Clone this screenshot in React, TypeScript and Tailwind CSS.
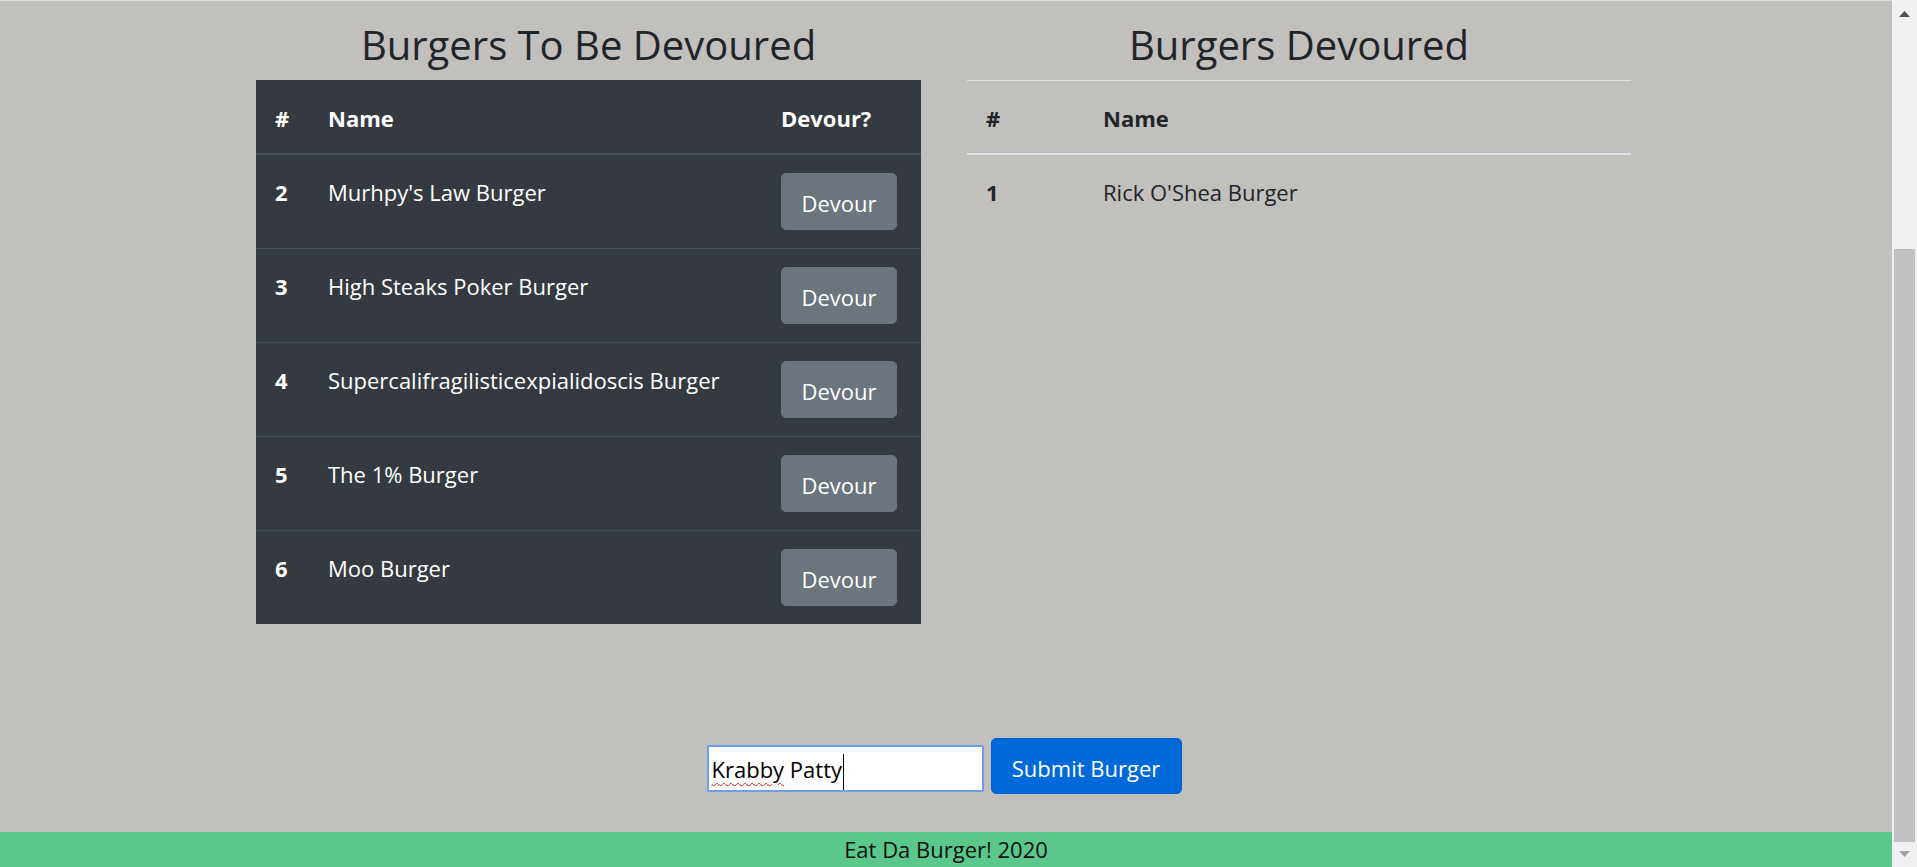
import React from "react";

const toDevour = [
  { id: 2, name: "Murhpy's Law Burger" },
  { id: 3, name: "High Steaks Poker Burger" },
  { id: 4, name: "Supercalifragilisticexpialidoscis Burger" },
  { id: 5, name: "The 1% Burger" },
  { id: 6, name: "Moo Burger" },
];

const devoured = [{ id: 1, name: "Rick O'Shea Burger" }];

function Scrollbar() {
  return (
    <div className="flex w-[25px] shrink-0 flex-col bg-[#f0f0f0]">
      <div className="flex h-[25px] justify-center pt-[11px]">
        <svg width="11" height="6" viewBox="0 0 11 6">
          <polygon points="5.5,0 11,6 0,6" fill="#505050" />
        </svg>
      </div>
      <div className="flex flex-1 flex-col px-[2px]">
        <div className="flex-1" />
        <div className="h-[593px] bg-[#c1c1c1]" />
      </div>
      <div className="flex h-[25px] justify-center pt-[9px]">
        <svg width="11" height="6" viewBox="0 0 11 6">
          <polygon points="0,0 11,0 5.5,6" fill="#a3a3a3" />
        </svg>
      </div>
    </div>
  );
}

export default function App() {
  return (
    <div className="flex h-[867px] w-[1917px] overflow-hidden bg-[#c1c0bc] font-['Open_Sans',sans-serif] text-[#212529]">
      <div className="flex flex-1 flex-col border-t border-[#dcdcdc]">
        <main className="flex flex-1 flex-col">
          <div className="flex gap-[46px] pl-[256px]">
            {/* Left column */}
            <section className="w-[665px]">
              <h1 className="pt-[20px] pb-[11px] text-center text-[40px] font-normal leading-[48px]">
                Burgers To Be Devoured
              </h1>
              <div className="bg-[#343a40] text-[22px] leading-[33px] text-white">
                <div className="grid h-[75px] grid-cols-[53px_453px_1fr] border-b-2 border-[#454d55] font-bold">
                  <div className="pl-[19px] pt-[22px]">#</div>
                  <div className="pl-[19px] pt-[22px]">Name</div>
                  <div className="pl-[19px] pt-[22px]">Devour?</div>
                </div>
                {toDevour.map((b, i) => (
                  <div
                    key={b.id}
                    className={
                      i === 0
                        ? "grid h-[93px] grid-cols-[53px_453px_1fr]"
                        : "grid h-[94px] grid-cols-[53px_453px_1fr] border-t border-[#454d55]"
                    }
                  >
                    <div className="pl-[19px] pt-[21px] font-bold">{b.id}</div>
                    <div className="pl-[19px] pt-[21px]">{b.name}</div>
                    <div className="pl-[19px] pt-[18px]">
                      <button className="flex h-[57px] w-[116px] items-center justify-center rounded-[5px] border border-[#6c757d] bg-[#6c757d] pt-[4px] text-[22px] leading-[33px] text-white">
                        Devour
                      </button>
                    </div>
                  </div>
                ))}
              </div>
            </section>

            {/* Right column */}
            <section className="w-[664px]">
              <h1 className="pt-[20px] pb-[11px] text-center text-[40px] font-normal leading-[48px]">
                Burgers Devoured
              </h1>
              <div className="text-[22px] leading-[33px]">
                <div className="grid h-[75px] grid-cols-[117px_1fr] border-t border-b-2 border-[#dee2e6] font-bold">
                  <div className="pl-[19px] pt-[21px]">#</div>
                  <div className="pl-[19px] pt-[21px]">Name</div>
                </div>
                {devoured.map((b) => (
                  <div key={b.id} className="grid h-[93px] grid-cols-[117px_1fr]">
                    <div className="pl-[19px] pt-[21px] font-bold">{b.id}</div>
                    <div className="pl-[19px] pt-[21px]">{b.name}</div>
                  </div>
                ))}
              </div>
            </section>
          </div>

          {/* Form */}
          <div className="mt-[114px] flex items-start justify-center gap-[7px] pr-[4px]">
            <div className="mt-[7px] flex h-[47px] w-[277px] items-center rounded-[2px] border-2 border-[#6d9fe9] bg-white pl-[3px] pt-[2px] text-[22px] leading-[33px] text-black">
              <span className="underline decoration-[#e02020] decoration-wavy decoration-1 underline-offset-[4px]">
                Krabby
              </span>
              <span className="whitespace-pre"> Patty</span>
              <span className="ml-px h-[36px] w-px self-end bg-black" />
            </div>
            <button className="flex h-[56px] w-[191px] items-center justify-center rounded-[5px] border border-[#0062cc] bg-[#0069d9] pt-[4px] text-[22px] leading-[31px] text-white">
              Submit Burger
            </button>
          </div>
        </main>
        <footer className="h-[35px] shrink-0 bg-[#5bc78a] pt-[1px] text-center text-[22px] leading-[33px] text-[#111]">
          Eat Da Burger! 2020
        </footer>
      </div>
      <Scrollbar />
    </div>
  );
}
